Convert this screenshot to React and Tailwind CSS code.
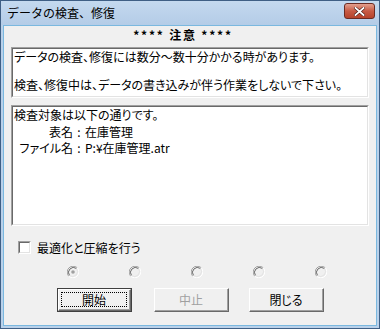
import React from 'react';

const jp = "font-['Noto_Sans_CJK_JP','Noto_Sans',sans-serif]";
const palt = "[font-feature-settings:'palt']";

function Radio({ checked }) {
  return (
    <svg width="12" height="12" viewBox="0 0 12 12" className="block">
      <circle cx="6" cy="6" r="5" fill="#f0f0f0" />
      {/* top-left dark arc */}
      <path d="M1.76 10.24 A6 6 0 0 1 10.24 1.76" fill="none" stroke="#a0a0a0" strokeWidth="1" />
      <path d="M2.5 9.5 A5 5 0 0 1 9.5 2.5" fill="none" stroke="#696969" strokeWidth="1" />
      {/* bottom-right light arc */}
      <path d="M10.24 1.76 A6 6 0 0 1 1.76 10.24" fill="none" stroke="#ffffff" strokeWidth="1" />
      <path d="M9.5 2.5 A5 5 0 0 1 2.5 9.5" fill="none" stroke="#e3e3e3" strokeWidth="1" />
      {checked && <circle cx="6" cy="6" r="1.8" fill="#a0a0a0" />}
    </svg>
  );
}

function Button({ children, isDefault, disabled, className = '' }) {
  return (
    <div className={`w-[75px] h-[24px] ${isDefault ? 'border border-[#404040]' : ''} ${className}`}>
      <div className="h-full border-t border-l border-white border-b border-r border-b-[#696969] border-r-[#696969] bg-[#f0f0f0]">
        <div className="h-full border-b border-r border-[#a0a0a0] border-t-transparent border-l-transparent flex items-center justify-center p-[2px]">
          <div className={`w-full h-full flex items-center justify-center ${isDefault ? 'border border-dotted border-black' : ''}`}>
            <span className={`text-[12px] leading-none ${palt} ${disabled ? 'text-[#a0a0a0]' : 'text-black'}`}>{children}</span>
          </div>
        </div>
      </div>
    </div>
  );
}

function Sunken({ className, children }) {
  return (
    <div className={`border-t border-l border-[#a0a0a0] border-b border-r border-b-white border-r-white ${className}`}>
      <div className="h-full border-t border-l border-[#696969] border-b border-r border-b-[#e3e3e3] border-r-[#e3e3e3] bg-white">
        {children}
      </div>
    </div>
  );
}

export default function App() {
  return (
    <div className={`w-[380px] h-[329px] bg-[#b9d1ea] border border-[#3f5f85] flex flex-col ${jp}`}>
      {/* Title bar */}
      <div className="h-[24px] flex items-center justify-between pl-[6px] pr-[4px] bg-gradient-to-b from-[#c4d9ef] to-[#b4cce7] shrink-0">
        <span className="text-[12px] text-black leading-none">データの検査、修復</span>
        <div className="w-[31px] h-[16px] mt-[-4px] rounded-[3px] border border-[#6b2b23] bg-gradient-to-b from-[#e3a08f] via-[#c75a44] to-[#b6422b] flex items-center justify-center">
          <svg width="11" height="9" viewBox="0 0 11 9">
            <path d="M1.5 1 L9.5 8 M9.5 1 L1.5 8" stroke="#4a1a14" strokeWidth="3" strokeLinecap="square" />
            <path d="M1.5 1 L9.5 8 M9.5 1 L1.5 8" stroke="#ffffff" strokeWidth="1.8" strokeLinecap="square" />
          </svg>
        </div>
      </div>

      {/* Client area */}
      <div className={`flex-1 mx-[2px] mb-[2px] bg-[#f0f0f0] border border-[#7ab8df] flex flex-col px-[7px] ${palt}`}>
        <div className="h-[16px] mt-[1px] flex items-center justify-center pr-[14px]">
          <span className="text-[12px] font-bold leading-none text-black tracking-[1.8px] [font-feature-settings:normal]">**** 注意 ****</span>
        </div>

        <Sunken className="mt-[4px] h-[51px]">
          <div className="pt-[1px] pl-[1px] text-[12px] leading-[14px] text-black">
            <div>データの検査、修復には数分～数十分かかる時があります。</div>
            <div className="h-[14px]" />
            <div>検査、修復中は、データの書き込みが伴う作業をしないで下さい。</div>
          </div>
        </Sunken>

        <Sunken className="mt-[7px] h-[121px]">
          <div className="pl-[1px] text-[12px] leading-[16.5px] text-black">
            <div>検査対象は以下の通りです。</div>
            <div className="grid grid-cols-[59px_12px_auto] whitespace-nowrap">
              <span className="text-right">表名</span>
              <span className="text-center">:</span>
              <span>在庫管理</span>
              <span className="text-right">ファイル名</span>
              <span className="text-center">:</span>
              <span>P:¥在庫管理.atr</span>
            </div>
          </div>
        </Sunken>

        <div className="mt-[15px] flex items-center gap-[6px] pl-[7px]">
          <Sunken className="w-[13px] h-[13px]" />
          <span className="text-[12px] leading-none text-black">最適化と圧縮を行う</span>
        </div>

        <div className="mt-[12px] flex pl-[56px] gap-[50px]">
          <Radio checked />
          <Radio />
          <Radio />
          <Radio />
          <Radio />
        </div>

        <div className="mt-[10px] flex pl-[46px]">
          <Button isDefault>開始</Button>
          <Button disabled className="ml-[22px]">中止</Button>
          <Button className="ml-[20px]">閉じる</Button>
        </div>
      </div>
    </div>
  );
}
